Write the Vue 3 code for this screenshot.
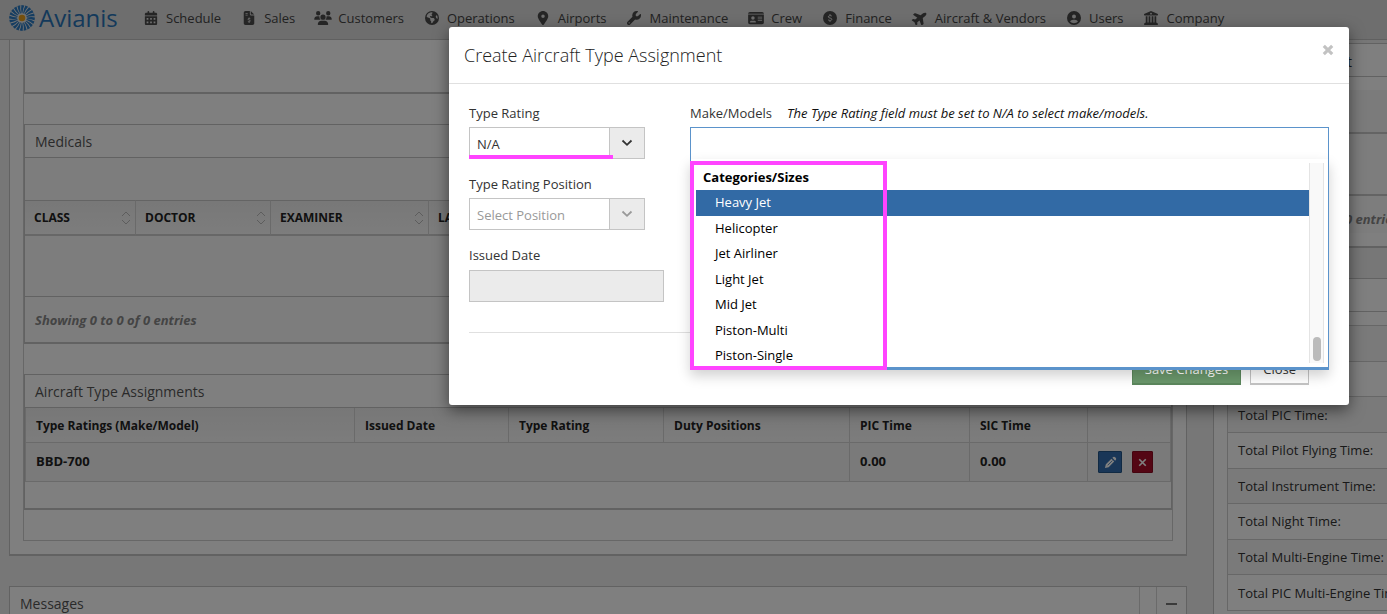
<script setup>
import { ref } from 'vue'

const navItems = [
  { label: 'Schedule', icon: 'calendar' },
  { label: 'Sales', icon: 'invoice' },
  { label: 'Customers', icon: 'people' },
  { label: 'Operations', icon: 'globe' },
  { label: 'Airports', icon: 'pin' },
  { label: 'Maintenance', icon: 'wrench' },
  { label: 'Crew', icon: 'idcard' },
  { label: 'Finance', icon: 'dollar' },
  { label: 'Aircraft & Vendors', icon: 'plane' },
  { label: 'Users', icon: 'user' },
  { label: 'Company', icon: 'bank' },
]

const rays = Array.from({ length: 20 }, (_, i) => i * 18)
const medicalColumns = ['CLASS', 'DOCTOR', 'EXAMINER', 'LAST EXAM']
const categories = ['Heavy Jet', 'Helicopter', 'Jet Airliner', 'Light Jet', 'Mid Jet', 'Piston-Multi', 'Piston-Single']
const totals = [
  'Total Flights:',
  'Total Time:',
  'Total PIC Time:',
  'Total Pilot Flying Time:',
  'Total Instrument Time:',
  'Total Night Time:',
  'Total Multi-Engine Time:',
  'Total PIC Multi-Engine Time:',
]
const selected = ref('Heavy Jet')
const rating = ref('N/A')
</script>

<template>
  <div class="app">
    <header class="topbar">
      <a class="brand" href="#">
        <svg class="logo" viewBox="-13 -13 26 26" aria-hidden="true">
          <circle r="12" fill="#e6e6e6" />
          <path v-for="r in rays" :key="r" :transform="`rotate(${r})`" d="M-.4 -4.6 Q-1.300 -9 -.6 -12.900 L2.300 -12.600 Q.7 -9 .4 -4.600Z" fill="#2b7ac2" />
          <circle r="4.500" fill="#e6e6e6" />
          <circle r="3.300" fill="#e8a01c" />
        </svg>
        <span>Avianis</span>
      </a>
      <nav class="nav">
        <a v-for="item in navItems" :key="item.label" href="#" class="nav-item">
          <svg v-if="item.icon === 'calendar'" class="ico" viewBox="-32 0 512 512"><path d="M128 0c17.700 0 32 14.300 32 32V64H288V32c0-17.700 14.300-32 32-32s32 14.300 32 32V64h48c26.500 0 48 21.500 48 48v48H0V112C0 85.500 21.500 64 48 64H96V32c0-17.700 14.300-32 32-32zM0 192H448V464c0 26.500-21.500 48-48 48H48c-26.500 0-48-21.500-48-48V192zM64 256v64h64v-64zM192 256v64h64v-64zM320 256v64h64v-64zM64 384v64h64v-64zM192 384v64h64v-64zM320 384v64h64v-64z" fill-rule="evenodd" /></svg>
          <svg v-else-if="item.icon === 'invoice'" class="ico" viewBox="-64 0 512 512"><path fill-rule="evenodd" d="M64 0C28.700 0 0 28.700 0 64V448c0 35.300 28.700 64 64 64H320c35.300 0 64-28.700 64-64V160H256c-17.700 0-32-14.300-32-32V0H64zM256 0V128H384L256 0zM64 72h80v32H64zM64 136h80v32H64z" /><path class="cut" d="M240 282c-20-14-84-20-84 18 0 40 84 20 84 62 0 38-64 36-90 16M196 240v34M196 398v34" /></svg>
          <svg v-else-if="item.icon === 'people'" class="ico" viewBox="0 0 640 512"><path d="M144 0a80 80 0 1 1 0 160A80 80 0 1 1 144 0zM512 0a80 80 0 1 1 0 160A80 80 0 1 1 512 0zM0 298.700C0 239.800 47.800 192 106.700 192h42.700c15.900 0 31 3.500 44.600 9.700c-1.300 7.200-1.900 14.700-1.900 22.300c0 38.200 16.800 72.500 43.300 96H21.300C9.600 320 0 310.400 0 298.700zM404.600 320c26.600-23.500 43.300-57.800 43.300-96c0-7.600-.7-15-1.900-22.300c13.600-6.300 28.700-9.700 44.600-9.700h42.700C592.200 192 640 239.800 640 298.700c0 11.800-9.600 21.300-21.300 21.300H404.600zM224 224a96 96 0 1 1 192 0 96 96 0 1 1-192 0zM128 485.300C128 411.700 187.700 352 261.300 352H378.700C452.300 352 512 411.700 512 485.300c0 14.700-11.900 26.700-26.700 26.700H154.700c-14.700 0-26.700-11.900-26.700-26.700z" /></svg>
          <svg v-else-if="item.icon === 'globe'" class="ico" viewBox="0 0 512 512"><circle cx="256" cy="256" r="256" /><path class="land" d="M57.700 193l9.400 16.400c8.300 14.500 21.900 25.200 38 29.800L163 255.700c17.200 4.900 29 20.600 29 38.500v39.900c0 11 6.200 21 16 25.900s16 14.900 16 25.900v39c0 15.600 14.900 26.900 29.900 22.600c16.100-4.600 28.600-17.500 32.700-33.800l2.800-11.200c4.200-16.900 15.200-31.400 30.300-40l8.100-4.600c15-8.500 24.200-24.500 24.200-41.700v-8.300c0-12.700-5.100-24.900-14.100-33.900l-3.900-3.900c-9-9-21.200-14.100-33.900-14.100H257c-11.100 0-22.100-2.900-31.800-8.400l-34.500-19.700c-4.300-2.500-7.600-6.500-9.200-11.200c-3.200-9.600 1.100-20 10.200-24.500l5.900-3c6.600-3.300 14.300-3.900 21.300-1.500l23.200 7.700c8.200 2.700 17.200-.4 21.900-7.500c4.700-7 4.200-16.300-1.200-22.800l-13.600-16.300c-10-12-9.900-29.500 .3-41.300l15.700-18.300c8.800-10.300 10.200-25 3.500-36.700l-2.400-4.200c-3.500-.2-6.900-.3-10.400-.3C163.100 48 84.400 108.900 57.700 193zM464 256c0-36.800-9.600-71.400-26.400-101.500L412 164.800c-15.700 6.300-23.800 23.800-18.500 39.800l16.900 50.700c3.500 10.400 12 18.300 22.600 20.900l29.100 7.300c1.200-9 1.800-18.200 1.800-27.500z" /></svg>
          <svg v-else-if="item.icon === 'pin'" class="ico" viewBox="-64 0 512 512"><path d="M215.700 499.200C267 435 384 279.400 384 192C384 86 298 0 192 0S0 86 0 192c0 87.400 117 243 168.300 307.200c12.300 15.300 35.100 15.300 47.400 0zM192 128a64 64 0 1 1 0 128 64 64 0 1 1 0-128z" /></svg>
          <svg v-else-if="item.icon === 'wrench'" class="ico" viewBox="0 0 512 512"><path d="M352 320c88.400 0 160-71.600 160-160c0-15.300-2.200-30.100-6.200-44.200c-3.100-10.800-16.400-13.200-24.300-5.300l-76.800 76.800c-3 3-7.100 4.700-11.300 4.700H336c-8.800 0-16-7.200-16-16V118.600c0-4.200 1.700-8.300 4.700-11.300l76.800-76.800c7.900-7.900 5.400-21.200-5.300-24.300C382.100 2.200 367.300 0 352 0C263.600 0 192 71.600 192 160c0 19.100 3.400 37.500 9.500 54.500L19.900 396.100C7.200 408.800 0 426.100 0 444.100C0 481.600 30.400 512 67.900 512c18 0 35.300-7.200 48-19.900L297.500 310.500c17 6.200 35.400 9.500 54.500 9.500zM80 408a24 24 0 1 1 0 48 24 24 0 1 1 0-48z" /></svg>
          <svg v-else-if="item.icon === 'idcard'" class="ico" viewBox="0 0 576 512"><path fill-rule="evenodd" d="M0 96c0-35.300 28.700-64 64-64H512c35.300 0 64 28.700 64 64H0zM0 128H576V416c0 35.300-28.700 64-64 64H64c-35.300 0-64-28.700-64-64V128zM64 405c0 7 5 11 11 11h202c6 0 11-4 11-11 0-29-24-53-53-53H117c-29 0-53 24-53 53zM176 320a64 64 0 1 0 0-128 64 64 0 1 0 0 128zM352 208v32h160v-32zM352 272v32h160v-32zM352 336v32h160v-32z" /></svg>
          <svg v-else-if="item.icon === 'dollar'" class="ico" viewBox="0 0 512 512"><circle cx="256" cy="256" r="256" /><path class="cut" d="M322 184c-30-22-128-24-128 30 0 60 130 28 130 88 0 56-96 52-138 22M256 112v54M256 348v54" /></svg>
          <svg v-else-if="item.icon === 'plane'" class="ico" viewBox="0 0 576 512"><path transform="rotate(-38 288 256)" d="M482.300 192c34.200 0 93.700 29 93.700 64c0 36-59.500 64-93.700 64H365.700L265.200 495.900c-5.700 10-16.300 16.100-27.800 16.100H181.200c-10.600 0-18.300-10.200-15.400-20.400L214.900 320H112L68.800 377.600c-3 4-7.800 6.400-12.800 6.400H14c-7.800 0-14-6.300-14-14c0-1.300.2-2.600.5-3.900L32 256 .5 145.900c-.4-1.300-.5-2.600-.5-3.900c0-7.800 6.300-14 14-14H56c5 0 9.800 2.400 12.800 6.400L112 192H214.900L165.800 20.400C162.900 10.200 170.600 0 181.200 0h56.200c11.500 0 22.100 6.200 27.800 16.100L365.700 192H482.300z" /></svg>
          <svg v-else-if="item.icon === 'user'" class="ico" viewBox="0 0 512 512"><path d="M399 384.200C376.900 345.800 335.400 320 288 320H224c-47.400 0-88.900 25.800-111 64.200c35.200 39.200 86.200 63.800 143 63.800s107.800-24.700 143-63.800zM0 256a256 256 0 1 1 512 0A256 256 0 1 1 0 256zm256 16a72 72 0 1 0 0-144 72 72 0 1 0 0 144z" fill-rule="evenodd" /></svg>
          <svg v-else class="ico" viewBox="0 0 512 512"><path fill-rule="evenodd" d="M256 0L24 104c-18 8-24 14-24 32 0 14 8 24 24 24h464c16 0 24-10 24-24 0-18-6-24-24-32zM256 64a32 32 0 1 1 0 64 32 32 0 1 1 0-64zM64 192h64v224h40V192h64v224h48V192h64v224h40V192h64v228l46 32c14 10 18 24 18 32 0 16-10 28-28 28H28c-18 0-28-12-28-28 0-8 4-22 18-32l46-32z" /></svg>
          <span>{{ item.label }}</span>
        </a>
      </nav>
    </header>

    <main class="content">
      <div class="col-main">
        <section class="panel upper">
          <div class="inner">
            <div class="box tail"></div>
            <div class="box">
              <h2 class="box-title">Medicals</h2>
              <div class="toolbar"></div>
              <table class="medical">
                <thead>
                  <tr>
                    <th v-for="c in medicalColumns" :key="c">
                      <div class="th-in">
                        <span>{{ c }}</span>
                        <svg class="sort" viewBox="0 0 10 14"><path d="M1 5l4-4 4 4M1 9l4 4 4-4" /></svg>
                      </div>
                    </th>
                  </tr>
                </thead>
                <tbody><tr><td colspan="4"></td></tr></tbody>
              </table>
              <p class="showing">Showing 0 to 0 of 0 entries</p>
            </div>
            <div class="box">
              <h2 class="box-title">Aircraft Type Assignments</h2>
              <table class="types">
                <thead>
                  <tr>
                    <th>Type Ratings (Make/Model)</th>
                    <th>Issued Date</th>
                    <th>Type Rating</th>
                    <th>Duty Positions</th>
                    <th>PIC Time</th>
                    <th>SIC Time</th>
                    <th></th>
                  </tr>
                </thead>
                <tbody>
                  <tr>
                    <td colspan="4">BBD-700</td>
                    <td>0.00</td>
                    <td>0.00</td>
                    <td>
                      <div class="actions">
                        <button class="act edit" aria-label="Edit">
                          <svg viewBox="0 0 14 14"><path d="M1 13l1-4 6-6 3 3-6 6zM9 2l1-1q1-.6 2 .3l.8.8q.8 1 0 2L12 5z" fill="#fff" /><path d="M4 10l5-5" stroke="#2f69a8" stroke-width=".8" /></svg>
                        </button>
                        <button class="act del" aria-label="Delete">
                          <svg viewBox="0 0 14 14"><path d="M3.500 3.500l7 7m0-7l-7 7" stroke="#fff" stroke-width="1.800" /></svg>
                        </button>
                      </div>
                    </td>
                  </tr>
                </tbody>
              </table>
              <div class="box-end"></div>
            </div>
          </div>
        </section>
        <section class="panel messages">
          <h2>Messages</h2>
          <span class="slot"></span>
          <button class="collapse" aria-label="Collapse"></button>
        </section>
      </div>

      <aside class="col-side">
        <section class="side-panel first">
          <div class="side-head"><span>t</span></div>
          <div class="side-gap"></div>
          <div class="side-tools"></div>
          <div class="side-body"></div>
          <p class="side-showing">Showing 0 to 0 of 0 entries</p>
        </section>
        <section class="side-panel second">
          <div class="side-head"></div>
          <table class="totals">
            <tbody><tr v-for="t in totals" :key="t"><td>{{ t }}</td></tr></tbody>
          </table>
        </section>
      </aside>
    </main>

    <div class="backdrop">
      <div class="modal" role="dialog" aria-labelledby="dlg-title">
        <div class="modal-head">
          <h1 id="dlg-title">Create Aircraft Type Assignment</h1>
          <button class="x" aria-label="Dismiss">
            <svg viewBox="0 0 10 10"><path d="M1.500 1.500l7 7m0-7l-7 7" stroke="#c2c2c2" stroke-width="2.600" /></svg>
          </button>
        </div>
        <form class="modal-body" @submit.prevent>
          <div class="fields">
            <div class="left">
              <div class="field">
                <label for="rating">Type Rating</label>
                <div class="pick">
                  <select id="rating" v-model="rating"><option>N/A</option></select>
                  <span class="arrow"><svg viewBox="0 0 12 8"><path d="M1.500 1.500L6 5.800l4.500-4.300" /></svg></span>
                  <i class="underline"></i>
                </div>
              </div>
              <div class="field">
                <label for="position">Type Rating Position</label>
                <div class="pick off">
                  <select id="position" disabled><option>Select Position</option></select>
                  <span class="arrow"><svg viewBox="0 0 12 8"><path d="M1.500 1.500L6 5.800l4.500-4.300" /></svg></span>
                </div>
              </div>
              <div class="field">
                <label for="issued">Issued Date</label>
                <input id="issued" class="date" type="text" disabled />
              </div>
            </div>
            <div class="right">
              <div class="model-label">
                <label for="models">Make/Models</label>
                <em>The Type Rating field must be set to N/A to select make/models.</em>
              </div>
              <div class="combo">
                <input id="models" type="text" autocomplete="off" />
                <div class="menu">
                  <div class="list">
                    <div class="options">
                      <strong>Categories/Sizes</strong>
                      <ul role="listbox" aria-label="Categories/Sizes">
                        <li v-for="c in categories" :key="c" role="option" :aria-selected="c === selected" :class="{ on: c === selected }" @mouseenter="selected = c">{{ c }}</li>
                      </ul>
                    </div>
                    <div class="track"><i></i></div>
                  </div>
                </div>
                <i class="frame"></i>
              </div>
            </div>
          </div>
          <div class="foot">
            <button class="btn save" type="submit">Save Changes</button>
            <button class="btn" type="button">Close</button>
          </div>
        </form>
      </div>
    </div>
  </div>
</template>

<style>
html, body { margin: 0; overflow: hidden; }
</style>

<style scoped>
* { box-sizing: border-box; }
.app { position: relative; height: 100vh; overflow: hidden; background: #efefef; color: #333; font: 13px/18px "Open Sans", "Noto Sans", sans-serif; display: flex; flex-direction: column; }
h1, h2, p, ul { margin: 0; padding: 0; font-weight: 400; }
button, input, select { font: inherit; color: inherit; margin: 0; }
a { color: inherit; text-decoration: none; }

.topbar { flex: none; height: 40px; display: flex; align-items: center; padding: 0 9px 4px; background: #dcdcdc; border-bottom: 1px solid #c0c0c0; }
.brand { display: flex; align-items: center; gap: 4px; width: 133px; color: #2873b6; font-size: 24px; line-height: 30px; }
.logo { width: 26px; height: 26px; flex: none; }
.nav { display: flex; gap: 19px; }
.nav-item { display: flex; align-items: center; gap: 6px; white-space: nowrap; color: #444; }
.ico { width: 18px; height: 14px; fill: #4a4a4a; }
.cut { fill: none; stroke: #dcdcdc; stroke-width: 36; }
.land { fill: #dcdcdc; }

.content { flex: 1; min-height: 0; display: grid; grid-template-columns: minmax(0, 1fr) 174px; gap: 26px; padding-left: 9px; overflow: hidden; }
.panel { background: #fff; border: 1px solid #c4c4c4; }
.upper { padding: 0 13px 13px; border-top: 0; border-bottom-width: 2px; }
.inner { border: 1px solid #cfcfcf; border-top: 0; padding-bottom: 30px; display: flex; flex-direction: column; gap: 30px; }
.box { border: 1px solid #c4c4c4; border-bottom-width: 2px; background: #fff; }
.tail { height: 54px; border-top: 0; }
.box-title { height: 33px; padding: 0 10px; font-size: 14px; line-height: 34px; color: #555; border-bottom: 1px solid #c4c4c4; }
.toolbar { height: 42px; background: #fafafa; }
table { width: 100%; border-collapse: separate; border-spacing: 0; table-layout: fixed; }
th, td { padding: 0; text-align: left; }
.medical th { height: 36px; padding: 0 4px 0 9px; font-size: 12px; color: #222; border-top: 1px solid #c8c8c8; border-bottom: 2px solid #cfcfcf; border-left: 1px solid #d4d4d4; background: linear-gradient(#f0f0f0, #fafafa); }
.medical th:first-child { width: 110px; border-left: 0; }
.medical th:nth-child(2) { width: 135px; }
.medical th:nth-child(3) { width: 158px; }
.th-in { display: flex; justify-content: space-between; align-items: center; }
.sort { width: 10px; height: 14px; fill: none; stroke: #bbb; }
.medical td { height: 60px; background: #fafafa; }
.showing { height: 46px; padding: 0 10px; line-height: 47px; font-size: 13px; font-weight: 700; font-style: italic; color: #888; background: #fafafa; border-top: 1px solid #c4c4c4; }
.types { border-left: 1px solid #d4d4d4; }
.types th, .types td { padding: 0 10px; border-right: 1px solid #d4d4d4; border-bottom: 1px solid #d4d4d4; font-weight: 700; color: #222; }
.types th { height: 35px; padding-top: 2px; font-size: 12px; background: linear-gradient(#efefef, #f9f9f9); }
.types td { height: 39px; padding-bottom: 3px; background: #f5f5f5; }
.types td:last-child { padding-bottom: 0; }
.types th:nth-child(2) { width: 154px; }
.types th:nth-child(3) { width: 155px; }
.types th:nth-child(4) { width: 186px; }
.types th:nth-child(5) { width: 120px; }
.types th:nth-child(6) { width: 118px; }
.types th:nth-child(7) { width: 83px; }
.actions { display: flex; gap: 10px; }
.act { width: 24px; height: 22px; padding: 0; border: 1px solid; border-radius: 1px; display: grid; place-items: center; }
.act svg { width: 13px; height: 13px; fill: none; }
.edit { background: #326dae; border-color: #235487; }
.del { width: 21px; background: #a80d28; border-color: #8b0a20; }
.box-end { height: 26px; }
.messages { margin-top: 30px; height: 60px; display: flex; }
.messages h2 { flex: 1; padding: 0 10px; font-size: 14px; line-height: 34px; color: #555; }
.slot { width: 17px; border-left: 1px solid #d4d4d4; }
.collapse { width: 30px; height: 34px; border: 0; border-left: 1px solid #d4d4d4; background: none; padding: 0; display: grid; place-items: center; }
.collapse::before { content: ""; width: 11px; height: 2px; background: #777; }

.col-side { padding-top: 3px; overflow: hidden; }
.side-panel { background: #fff; border: 1px solid #c4c4c4; border-right: 0; }
.side-head { height: 33px; border-bottom: 1px solid #c4c4c4; display: flex; justify-content: flex-end; padding: 9px 35px 0 0; font-size: 14px; }
.side-gap { height: 13px; }
.side-tools { margin-left: 13px; height: 44px; background: #f6f6f6; border-bottom: 2px solid #c8c8c8; }
.side-body { margin-left: 13px; height: 62px; background: #fafafa; border-bottom: 2px solid #c8c8c8; }
.side-showing { margin-left: 13px; height: 37px; padding-left: 10px; line-height: 47px; white-space: nowrap; background: #fafafa; color: #888; font-weight: 700; font-style: italic; }
.first { padding-bottom: 13px; border-bottom-width: 2px; }
.second { margin-top: 30px; padding-bottom: 30px; }
.totals { margin: 13px 0 0 13px; height: 286px; border: 1px solid #cfcfcf; border-bottom: 0; }
.totals td { padding-left: 10px; white-space: nowrap; border-bottom: 1px solid #cfcfcf; color: #333; }
.totals tr:nth-child(odd) td { background: #f5f5f5; }

.backdrop { position: absolute; inset: 0; background: rgba(0, 0, 0, .5); padding: 27px 38px 0; overflow: hidden; }
.modal { width: 900px; max-width: 100%; margin-left: auto; background: #fff; border-radius: 3px; box-shadow: 0 5px 15px rgba(0, 0, 0, .5); }
.modal-head { height: 57px; padding: 0 15px; display: flex; justify-content: space-between; border-bottom: 1px solid #e0e0e0; }
h1 { font-size: 18px; line-height: 56px; font-weight: 300; color: #222; }
.x { width: 12px; height: 12px; padding: 0; border: 0; background: none; margin-top: 17px; }
.x svg { display: block; width: 12px; height: 12px; }
.modal-body { padding: 20px; }
.fields { display: flex; gap: 26px; padding-bottom: 30px; border-bottom: 1px solid #e0e0e0; }
.left { width: 195px; flex: none; display: flex; flex-direction: column; gap: 16px; }
.field { display: flex; flex-direction: column; gap: 4px; }
.field:last-child { gap: 5px; }
.field label { line-height: 19px; }
.pick { position: relative; display: flex; width: 176px; height: 32px; border: 1px solid #c4c4c4; background: #fff; }
.pick select { appearance: none; flex: 1; border: 0; padding: 2px 7px 0; background: #fff; opacity: 1; outline: 0; }
.arrow { width: 35px; background: #ebebeb; border-left: 1px solid #c4c4c4; display: grid; place-items: center; pointer-events: none; }
.arrow svg { width: 12px; height: 8px; fill: none; stroke: #333; stroke-width: 1.800; }
.off select { color: #999; }
.off .arrow svg { stroke: #999; }
.underline { position: absolute; left: -1px; bottom: -1px; width: 144px; height: 4px; background: #ff44ff; }
.date { width: 100%; height: 32px; border: 1px solid #c4c4c4; background: #ebebeb; }
.right { flex: 1; min-width: 0; }
.model-label { display: flex; gap: 15px; line-height: 19px; margin-bottom: 4px; white-space: nowrap; }
.model-label em { color: #111; }
.combo { position: relative; }
.combo input { display: block; width: 100%; height: 34px; border: 1px solid #5b93cb; border-bottom: 0; background: #fff; outline: 0; padding: 0 8px; }
.menu { position: absolute; z-index: 1; top: 32px; left: 0; right: 0; padding: 4px 4px 4px 5px; background: #fff; border: 1px solid #5b93cb; border-top: 0; border-bottom-width: 3px; box-shadow: 0 6px 12px rgba(0, 0, 0, .18); }
.list { display: flex; height: 200px; color: #000; }
.options { flex: 1; overflow: hidden; }
.options strong { display: block; height: 27px; padding-left: 7px; line-height: 28px; }
.options ul { height: 179px; display: grid; grid-auto-rows: 1fr; list-style: none; }
.options li { padding-left: 19px; line-height: 25px; }
.options .on { background: #326aa5; color: #fff; }
.track { width: 15px; border: 1px solid #e4e4e4; border-width: 0 1px; background: #f9f9f9; display: flex; align-items: flex-end; justify-content: center; padding-bottom: 2px; }
.track i { width: 8px; height: 24px; border-radius: 4px; background: #bbb; }
.frame { position: absolute; z-index: 2; left: 0; top: 34px; width: 197px; height: 209px; border: 4px solid #ff44ff; pointer-events: none; }
.foot { display: flex; justify-content: flex-end; gap: 9px; padding: 20px 20px 0 0; }
.btn { height: 32px; padding: 0 12px; border: 1px solid #c4c4c4; border-bottom-width: 2px; background: #fff; white-space: nowrap; }
.save { background: #6a976b; border-color: #5b875c; color: #fff; }
</style>
